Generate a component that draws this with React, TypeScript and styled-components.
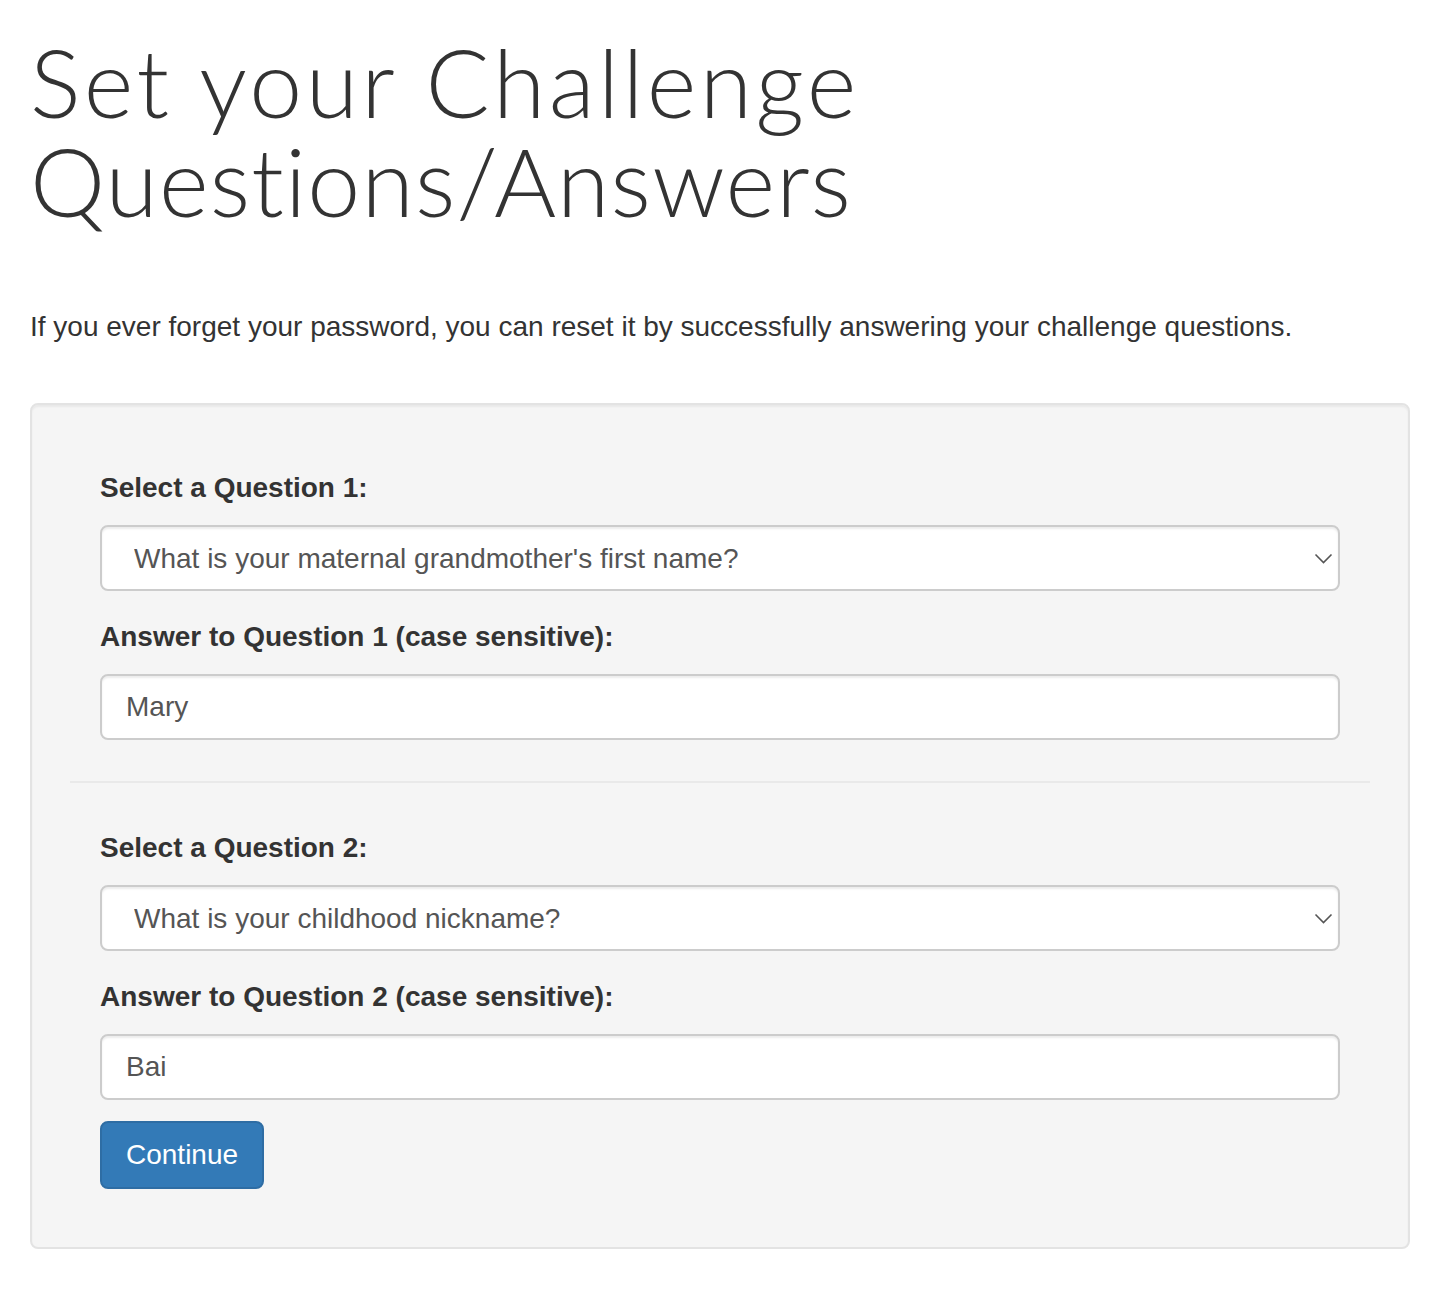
import React from "react";
import styled, { createGlobalStyle } from "styled-components";

const GlobalStyle = createGlobalStyle`
  html, body {
    margin: 0;
    padding: 0;
    background: #ffffff;
  }
  body {
    font-family: "Liberation Sans", Helvetica, Arial, sans-serif;
    font-size: 28px;
    line-height: 40px;
    color: #333333;
  }
  * { box-sizing: border-box; }
`;

const Page = styled.main`
  padding: 0 30px 40px;
`;

const Title = styled.h1`
  margin: 32px 0 0;
  font-family: Lato, "Open Sans", sans-serif;
  font-weight: 300;
  font-size: 95px;
  line-height: 99px;
  font-variant-ligatures: none;
  font-feature-settings: "liga" 0, "clig" 0;
  color: #333333;
`;

const TitleLine = styled.span<{ $spacing: number }>`
  display: block;
  letter-spacing: ${(p) => p.$spacing}px;
`;

const Intro = styled.p`
  margin: 77px 0 0;
`;

const Well = styled.form`
  margin-top: 56px;
  background: #f5f5f5;
  border: 2px solid #e3e3e3;
  border-radius: 8px;
  box-shadow: inset 0 2px 2px rgba(0, 0, 0, 0.05);
  padding: 38px;
`;

const Block = styled.fieldset<{ $top: number; $bottom: number }>`
  margin: 0;
  border: 0;
  min-width: 0;
  padding: ${(p) => p.$top}px 30px ${(p) => p.$bottom}px;
  display: flex;
  flex-direction: column;
  gap: 26px;
`;

const Group = styled.div`
  display: flex;
  flex-direction: column;
`;

const Label = styled.label`
  display: block;
  font-weight: bold;
  line-height: 40px;
  margin-bottom: 17px;
  color: #333333;
`;

const SelectWrap = styled.div`
  position: relative;
`;

const Select = styled.select`
  appearance: none;
  -webkit-appearance: none;
  display: block;
  width: 100%;
  height: 66px;
  padding: 0 56px 0 32px;
  font-family: "Liberation Sans", Helvetica, Arial, sans-serif;
  font-size: 28px;
  color: #555555;
  background: #ffffff;
  border: 2px solid #cccccc;
  border-radius: 8px;
  box-shadow: inset 0 2px 2px rgba(0, 0, 0, 0.075);
  outline: none;
`;

const Chevron = styled.svg`
  position: absolute;
  right: 7px;
  top: 50%;
  margin-top: -5px;
  pointer-events: none;
`;

const TextInput = styled.input`
  display: block;
  width: 100%;
  height: 66px;
  padding: 0 24px;
  font-family: "Liberation Sans", Helvetica, Arial, sans-serif;
  font-size: 28px;
  color: #555555;
  background: #ffffff;
  border: 2px solid #cccccc;
  border-radius: 8px;
  box-shadow: inset 0 2px 2px rgba(0, 0, 0, 0.075);
  outline: none;
`;

const Divider = styled.hr`
  margin: 0;
  border: 0;
  border-top: 2px solid #e9e9e9;
`;

const Actions = styled.div`
  padding: 21px 30px 20px;
`;

const Button = styled.button`
  display: inline-block;
  height: 68px;
  padding: 0 24px;
  font-family: "Liberation Sans", Helvetica, Arial, sans-serif;
  font-size: 28px;
  color: #ffffff;
  background: #337ab7;
  border: 2px solid #2e6da4;
  border-radius: 8px;
  cursor: pointer;
`;

const questions = [
  "What is your maternal grandmother's first name?",
  "What is your childhood nickname?",
  "What was the name of your first pet?",
  "In what city were you born?",
];

type QA = { n: number; question: string; answer: string };

const data: QA[] = [
  { n: 1, question: questions[0], answer: "Mary" },
  { n: 2, question: questions[1], answer: "Bai" },
];

function QuestionSelect({ value, id }: { value: string; id: string }) {
  return (
    <SelectWrap>
      <Select id={id} defaultValue={value}>
        {questions.map((q) => (
          <option key={q} value={q}>
            {q}
          </option>
        ))}
      </Select>
      <Chevron width="19" height="11" viewBox="0 0 19 11" aria-hidden="true">
        <path d="M1.5 1.5 L9.5 9.5 L17.5 1.5" fill="none" stroke="#555" strokeWidth="1.6" />
      </Chevron>
    </SelectWrap>
  );
}

export default function App() {
  return (
    <>
      <GlobalStyle />
      <Page>
        <Title>
          <TitleLine $spacing={3.4}>Set your Challenge</TitleLine>
          <TitleLine $spacing={1.2}>Questions/Answers</TitleLine>
        </Title>
        <Intro>
          If you ever forget your password, you can reset it by successfully answering your
          challenge questions.
        </Intro>
        <Well onSubmit={(e) => e.preventDefault()}>
          {data.map((item, i) => (
            <React.Fragment key={item.n}>
              {i > 0 && <Divider />}
              <Block $top={i === 0 ? 25 : 45} $bottom={i === 0 ? 41 : 0}>
                <Group>
                  <Label htmlFor={`q${item.n}`}>Select a Question {item.n}:</Label>
                  <QuestionSelect id={`q${item.n}`} value={item.question} />
                </Group>
                <Group>
                  <Label htmlFor={`a${item.n}`}>
                    Answer to Question {item.n} (case sensitive):
                  </Label>
                  <TextInput id={`a${item.n}`} type="text" defaultValue={item.answer} />
                </Group>
              </Block>
            </React.Fragment>
          ))}
          <Actions>
            <Button type="submit">Continue</Button>
          </Actions>
        </Well>
      </Page>
    </>
  );
}
